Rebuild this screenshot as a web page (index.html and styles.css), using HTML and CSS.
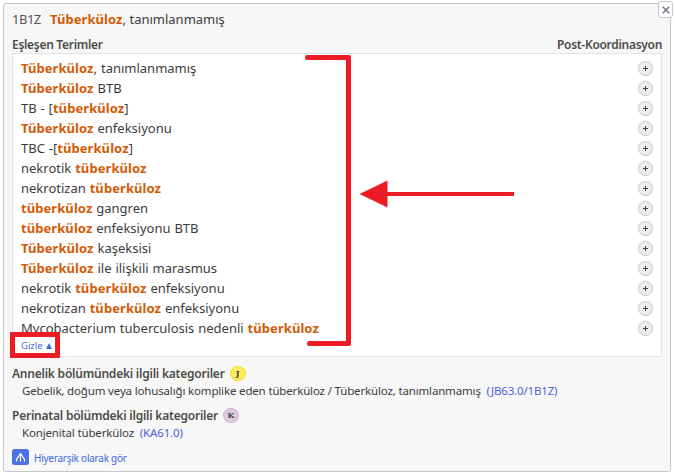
FILE: index.html
```html
<!DOCTYPE html>
<html lang="tr">
<head>
<meta charset="utf-8">
<title>1B1Z</title>
<link rel="stylesheet" href="styles.css">
</head>
<body>
<main class="panel">
  <button class="close" aria-label="Kapat"><svg width="8" height="8" viewBox="0 0 8 8"><path d="M.7.7l6.6 6.6M7.3.7L.7 7.3"/></svg></button>
  <h1 class="title"><span class="code">1B1Z</span><span><b>Tüberküloz</b>, tanımlanmamış</span></h1>
  <div class="heads"><span>Eşleşen Terimler</span><span class="post">Post-Koordinasyon</span></div>
  <section class="terms">
    <ul>
      <li><span><b>Tüberküloz</b>, tanımlanmamış</span><i class="plus"></i></li>
      <li><span><b>Tüberküloz</b> BTB</span><i class="plus"></i></li>
      <li><span>TB - [<b>tüberküloz</b>]</span><i class="plus"></i></li>
      <li><span><b>Tüberküloz</b> enfeksiyonu</span><i class="plus"></i></li>
      <li><span>TBC -[<b>tüberküloz</b>]</span><i class="plus"></i></li>
      <li><span>nekrotik <b>tüberküloz</b></span><i class="plus"></i></li>
      <li><span>nekrotizan <b>tüberküloz</b></span><i class="plus"></i></li>
      <li><span><b>tüberküloz</b> gangren</span><i class="plus"></i></li>
      <li><span><b>tüberküloz</b> enfeksiyonu BTB</span><i class="plus"></i></li>
      <li><span><b>Tüberküloz</b> kaşeksisi</span><i class="plus"></i></li>
      <li><span><b>Tüberküloz</b> ile ilişkili marasmus</span><i class="plus"></i></li>
      <li><span>nekrotik <b>tüberküloz</b> enfeksiyonu</span><i class="plus"></i></li>
      <li><span>nekrotizan <b>tüberküloz</b> enfeksiyonu</span><i class="plus"></i></li>
      <li><span>Mycobacterium tuberculosis nedenli <b>tüberküloz</b></span><i class="plus"></i></li>
    </ul>
    <a class="hide">Gizle <svg width="6" height="6" viewBox="0 0 6 6"><path d="M3 0l3 6H0z"/></svg></a>
  </section>
  <section class="related">
    <h2>Annelik bölümündeki ilgili kategoriler <span class="badge j">J</span></h2>
    <p>Gebelik, doğum veya lohusalığı komplike eden tüberküloz / Tüberküloz, tanımlanmamış <a>(JB63.0/1B1Z)</a></p>
  </section>
  <section class="related">
    <h2>Perinatal bölümdeki ilgili kategoriler <span class="badge k">K</span></h2>
    <p>Konjenital tüberküloz <a>(KA61.0)</a></p>
  </section>
  <a class="tree"><svg width="17" height="16" viewBox="0 0 17 16"><rect width="17" height="16" rx="2.5"/><path d="M8.500 4v8.500M8.500 4.500L4.500 10.500V12.500M8.500 4.500L12.500 10.500V12.500"/></svg><span>Hiyerarşik olarak gör</span></a>
</main>
<svg class="marks" width="675" height="475" viewBox="0 0 675 475">
  <path class="bracket" d="M307.500 57.500h41v286h-39"/>
  <path class="shaft" d="M385 194h129"/>
  <path class="tip" d="M359.500 194l28-13.500v27z"/>
  <rect class="frame" x="12.500" y="334.500" width="45" height="21"/>
</svg>
</body>
</html>
```
FILE: styles.css
```css
* { box-sizing: border-box; }
body { margin: 0; padding: 3px; width: 675px; height: 475px; background: #fff; color: #3c3c3c; font-family: "Noto Sans", "Open Sans", sans-serif; overflow: hidden; }
.panel { position: relative; width: 668px; height: 469px; padding: 5px 8px 0; border: 1px solid #c6c6c6; border-radius: 3px; background: #f7f7f7; }
.close { position: absolute; top: -3px; right: -3px; display: flex; align-items: center; justify-content: center; width: 15px; height: 17px; padding: 0; border: 1px solid #c6c6c6; border-radius: 3px; background: #fff; }
.close path { stroke: #667080; stroke-width: 1.3; fill: none; }
.title { display: flex; gap: 11px; margin: 0; height: 20px; font-size: 13px; font-weight: 400; line-height: 20px; }
.code { width: 27px; letter-spacing: -.5px; color: #555; }
b { color: #d45a05; font-weight: 700; letter-spacing: .07px; }
.heads { display: flex; justify-content: space-between; margin-top: 7px; height: 17px; font-size: 12px; font-weight: 600; line-height: 18px; letter-spacing: -.3px; color: #4c4c48; }
.terms { width: 650px; height: 304px; padding: 4px 8px 0; border: 1px solid #e4e4e4; background: #fff; }
ul { margin: 0; padding: 0; list-style: none; }
li { display: flex; align-items: center; justify-content: space-between; height: 20px; font-size: 13px; line-height: 20px; word-spacing: .5px; white-space: nowrap; }
.plus { position: relative; width: 15px; height: 15px; border: 1px solid #c6c6c6; border-radius: 50%; background: linear-gradient(#345, #345) center / 5px 1px no-repeat, linear-gradient(#345, #345) center / 1px 5px no-repeat, #eee; }
.hide { display: block; height: 14px; font-size: 9.500px; line-height: 15px; word-spacing: 1px; color: #4169e1; }
.hide path { fill: #4169e1; }
.related { height: 42px; }
.terms + .related { margin-top: 7px; }
h2 { display: flex; align-items: center; gap: 5px; margin: 0; height: 18px; font-size: 12px; font-weight: 600; line-height: 19px; letter-spacing: -.22px; color: #4c4c48; white-space: nowrap; }
.badge { display: flex; align-items: center; justify-content: center; width: 16px; height: 15px; border: 1px solid; border-radius: 50%; font: 700 8px "DejaVu Serif", serif; letter-spacing: 0; color: #444; }
.j { background: #fbe95f; border-color: #eee52b; }
.k { background: #dfcbdf; border-color: #cdb5d0; }
p { margin: 0; padding-left: 10px; font-size: 11.500px; line-height: 17px; letter-spacing: -.16px; white-space: nowrap; }
p a { margin-left: 3px; color: #4b61dc; }
.tree { display: flex; align-items: center; gap: 5px; height: 16px; margin-top: 1px; font-size: 10px; line-height: 16px; letter-spacing: -.24px; color: #4169e1; }
.tree rect { fill: #4a72e4; }
.tree path { fill: none; stroke: #fff; stroke-width: 1.2; }
.tree span { padding-top: 2px; }
.marks { position: absolute; top: 0; left: 0; pointer-events: none; }
.marks path, .marks rect { fill: none; stroke: #ed1c24; }
.marks .bracket { stroke-width: 5; stroke-linecap: round; stroke-linejoin: round; }
.marks .shaft { stroke-width: 4; }
.marks .tip { fill: #ed1c24; stroke: none; }
.marks .frame { stroke-width: 5; }
```
